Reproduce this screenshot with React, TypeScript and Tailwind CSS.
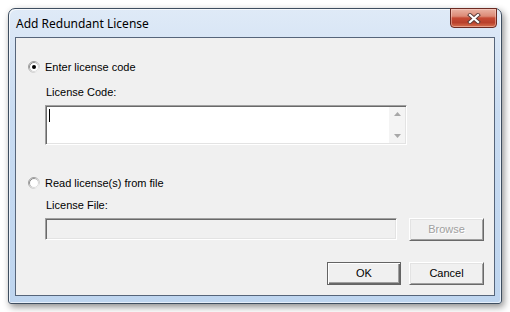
import React from "react";

function Radio({ checked, id }: { checked?: boolean; id: string }) {
  return (
    <svg width="12" height="12" viewBox="0 0 12 12" className="shrink-0">
      <defs>
        <linearGradient id={id + "o"} x1="0" y1="0" x2="1" y2="1">
          <stop offset="0" stopColor="#8a8a8a" />
          <stop offset="0.55" stopColor="#b8b8b8" />
          <stop offset="1" stopColor="#ffffff" />
        </linearGradient>
        <linearGradient id={id + "i"} x1="0" y1="0" x2="1" y2="1">
          <stop offset="0" stopColor="#5a5a5a" />
          <stop offset="0.5" stopColor="#c8c8c8" />
          <stop offset="1" stopColor="#e8e8e8" />
        </linearGradient>
      </defs>
      <circle cx="6" cy="6" r="5.5" fill="#ffffff" stroke={`url(#${id}o)`} strokeWidth="1" />
      <circle cx="6" cy="6" r="4.5" fill="#ffffff" stroke={`url(#${id}i)`} strokeWidth="1" />
      {checked && <circle cx="6" cy="6" r="2" fill="#000000" />}
    </svg>
  );
}

const sunken =
  "border-t border-l border-b border-r border-t-[#a0a0a0] border-l-[#a0a0a0] border-b-white border-r-white shadow-[inset_1px_1px_0_#696969,inset_-1px_-1px_0_#e3e3e3]";

const btn =
  "h-[23px] flex items-center justify-center bg-[#f0f0f0] border-t border-l border-b border-r border-t-white border-l-white border-b-[#696969] border-r-[#696969] shadow-[inset_1px_1px_0_#e3e3e3,inset_-1px_-1px_0_#a0a0a0]";

export default function App() {
  return (
    <div
      className="w-[510px] h-[312px] bg-white pl-[8px] pt-[8px]"
      style={{ fontFamily: '"Liberation Sans", Arial, sans-serif' }}
    >
      <div className="w-[494px] h-[296px] rounded-t-[7px] rounded-b-[3px] border border-[#3e4e60] bg-[linear-gradient(to_bottom,#dfeaf7,#c9dcf2_35%,#bed5ef_100%)] shadow-[2px_3px_7px_rgba(0,0,0,0.45),inset_1px_1px_0_rgba(255,255,255,0.7),inset_-1px_-1px_0_rgba(255,255,255,0.6)] flex flex-col">
        {/* title bar */}
        <div className="relative h-[28px] flex items-center pl-[7px]">
          <span
            className="text-[12px] text-black leading-none mt-[1px]"
            style={{ fontFamily: '"Noto Sans", "Open Sans", sans-serif' }}
          >
            Add Redundant License
          </span>
          <div className="absolute top-[-1px] right-[4px] w-[47px] h-[20px] rounded-b-[4px] border border-[#6b2a22] bg-[linear-gradient(to_bottom,#eab3a4_0%,#dc8a76_40%,#c64a34_50%,#b9402b_75%,#d7714f_100%)] shadow-[inset_0_0_0_1px_rgba(255,220,210,0.45)] flex items-center justify-center">
            <svg width="14" height="11" viewBox="0 0 14 11">
              <path d="M3 2 L11 9 M11 2 L3 9" stroke="#5a3a36" strokeWidth="4" strokeLinecap="square" />
              <path d="M3 2 L11 9 M11 2 L3 9" stroke="#ffffff" strokeWidth="2.2" strokeLinecap="square" />
            </svg>
          </div>
        </div>

        {/* client area */}
        <div className="mx-[6px] h-[259px] border border-[#56657a] bg-[#f0f0f0] flex flex-col pl-[12px] text-[11px] text-black">
          <div className="mt-[22px] h-[14px] flex items-center gap-[5px]">
            <Radio checked id="r1" />
            <span className="leading-none">Enter license code</span>
          </div>
          <div className="mt-[11px] h-[14px] flex items-center pl-[18px] leading-none">License Code:</div>
          <div className={`mt-[6px] ml-[17px] w-[362px] h-[40px] bg-white flex ${sunken}`}>
            <div className="flex-1 pl-[2px] pt-[2px]">
              <div className="ml-[1px] mt-[1px] w-[1px] h-[13px] bg-black" />
            </div>
            <div className="w-[16px] my-[1px] mr-[1px] bg-[#f4f4f4] flex flex-col items-center justify-between py-[5px]">
              <svg width="7" height="4" viewBox="0 0 7 4">
                <path d="M0 4 L3.5 0 L7 4 Z" fill="#a8a8a8" />
              </svg>
              <svg width="7" height="4" viewBox="0 0 7 4">
                <path d="M0 0 L7 0 L3.5 4 Z" fill="#a8a8a8" />
              </svg>
            </div>
          </div>
          <div className="mt-[31px] h-[14px] flex items-center gap-[5px]">
            <Radio id="r2" />
            <span className="leading-none">Read license(s) from file</span>
          </div>
          <div className="mt-[8px] h-[14px] flex items-center pl-[18px] leading-none">License File:</div>
          <div className="mt-[6px] ml-[17px] flex gap-[12px]">
            <div className={`w-[352px] h-[22px] bg-[#f0f0f0] ${sunken}`} />
            <div className={`${btn} w-[75px] text-[#a0a0a0] [text-shadow:1px_1px_0_#ffffff]`}>Browse</div>
          </div>
          <div className="mt-[21px] ml-[299px] flex gap-[8px]">
            <div className="w-[74px] h-[23px] border border-[#646464] bg-[#f0f0f0] flex items-center justify-center shadow-[inset_1px_1px_0_#ffffff,inset_-1px_-1px_0_#696969,inset_-2px_-2px_0_#a0a0a0]">
              OK
            </div>
            <div className={`${btn} w-[75px]`}>Cancel</div>
          </div>
        </div>
      </div>
    </div>
  );
}
